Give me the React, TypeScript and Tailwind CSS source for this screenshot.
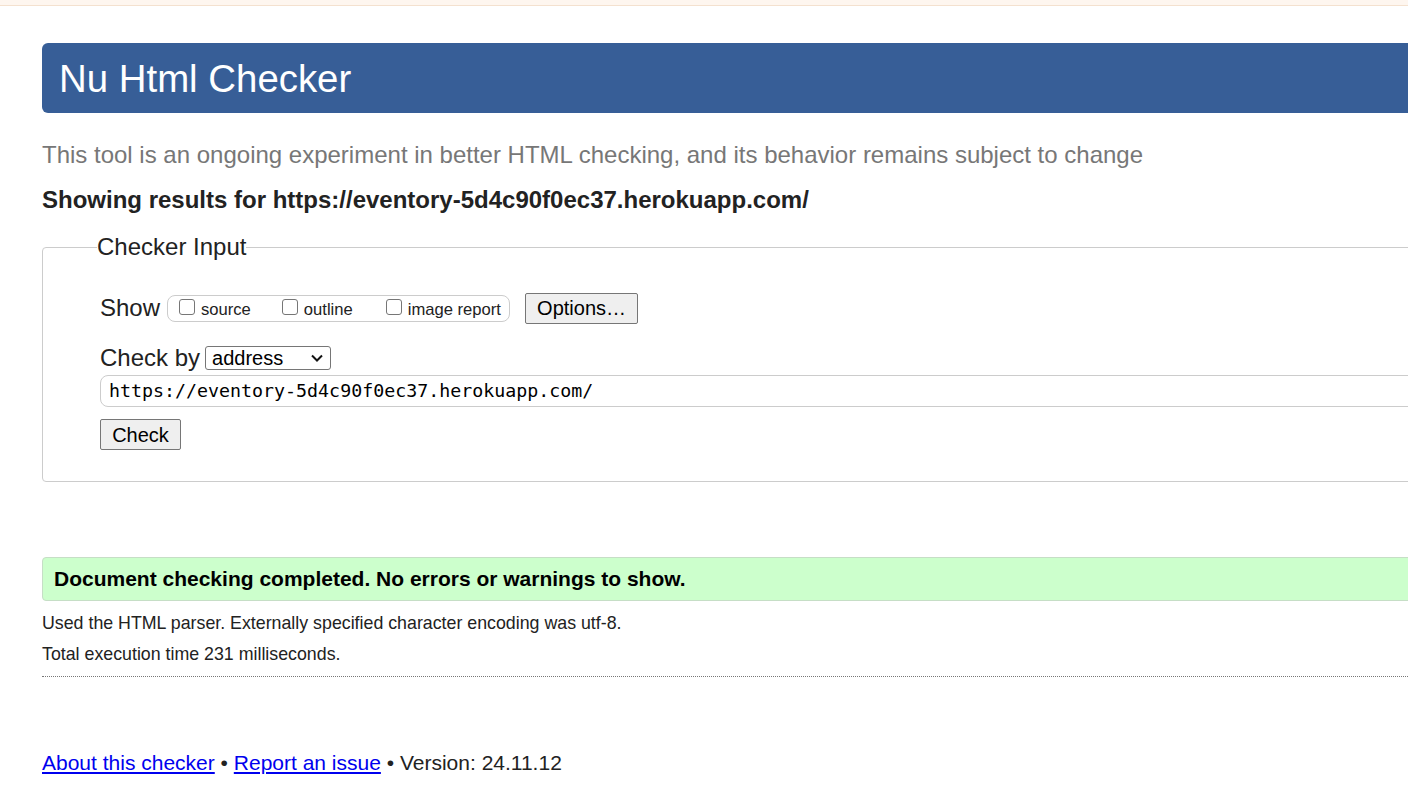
import React from "react";

function Box() {
  return (
    <span className="inline-block w-[16px] h-[16px] border border-[#767676] rounded-[3px] bg-white mr-[6px] relative top-[-4px]" />
  );
}

export default function App() {
  return (
    <div className="min-h-screen w-full overflow-hidden bg-white text-[#222] font-['Liberation_Sans',Arial,sans-serif]">
      <div className="h-[6px] bg-[#fef6ef] border-b border-[#f4e1cf]" />
      <div className="ml-[42px] w-[1420px]">
        <h1 className="mt-[37px] h-[70px] overflow-hidden bg-[#375e97] rounded-l-[6px] text-white text-[38.4px] leading-[72px] pl-[17px]">
          Nu Html Checker
        </h1>
        <p className="mt-[28px] text-[24px] leading-[28px] text-[#777]">
          This tool is an ongoing experiment in better HTML checking, and its behavior remains subject to change
        </p>
        <p className="mt-[17px] text-[24px] leading-[28px] font-bold text-[#222]">
          Showing results for https://eventory-5d4c90f0ec37.herokuapp.com/
        </p>
        <fieldset className="mt-[19px] border border-[#ccc] rounded-[4px] pl-[57px] pb-[31px]">
          <legend className="ml-[-3px] px-0 text-[24px] leading-[28px] text-[#222]">Checker Input</legend>
          <div className="mt-[31px] h-[32px] flex items-center">
            <span className="text-[24px] leading-[28px]">Show</span>
            <div className="ml-[7px] h-[27px] w-[343px] border border-[#ccc] rounded-[8px] flex items-end pb-[2px] pl-[11px] text-[16.6px] leading-[18px]">
              <span className="flex items-end"><Box />source</span>
              <span className="flex items-end ml-[31px]"><Box />outline</span>
              <span className="flex items-end ml-[33px]"><Box />image report</span>
            </div>
            <button className="ml-[15px] h-[31px] w-[113px] bg-[#efefef] border border-[#767676] rounded-[2px] text-[20px] leading-[24px] text-black">
              Options…
            </button>
          </div>
          <div className="mt-[21px] h-[26px] flex items-center">
            <span className="text-[24px] leading-[28px]">Check by</span>
            <div className="ml-[5px] h-[24px] w-[126px] border border-[#767676] rounded-[3px] flex items-center justify-between pl-[6px] pr-[6px] text-[20px] leading-[22px] text-black">
              <span>address</span>
              <svg width="14" height="10" viewBox="0 0 14 10" fill="none">
                <path d="M2 2.5 L7 7.5 L12 2.5" stroke="#111" strokeWidth="2" />
              </svg>
            </div>
          </div>
          <div className="mt-[4px] h-[32px] border border-[#ccc] rounded-[8px] flex items-center pl-[8px] font-['DejaVu_Sans_Mono',monospace] text-[18.3px] text-black">
            https://eventory-5d4c90f0ec37.herokuapp.com/
          </div>
          <button className="mt-[12px] block h-[31px] w-[81px] bg-[#efefef] border border-[#767676] rounded-[2px] text-[20px] leading-[24px] text-black">
            Check
          </button>
        </fieldset>
        <div className="mt-[75px] h-[44px] bg-[#ccffcc] border border-[#c6dec6] rounded-[4px] flex items-center pl-[11px] text-[21px] font-bold text-black">
          Document checking completed. No errors or warnings to show.
        </div>
        <p className="mt-[7px] text-[17.8px] leading-[31px] text-[#222]">
          Used the HTML parser. Externally specified character encoding was utf-8.
        </p>
        <p className="text-[17.8px] leading-[31px] text-[#222]">Total execution time 231 milliseconds.</p>
        <div className="mt-[6px] border-t border-dotted border-[#777]" />
        <p className="mt-[72px] text-[21px] leading-[28px] text-[#222]">
          <a href="#" className="text-[#0000ee] underline">About this checker</a>
          {" • "}
          <a href="#" className="text-[#0000ee] underline">Report an issue</a>
          {" • Version: 24.11.12"}
        </p>
      </div>
    </div>
  );
}
